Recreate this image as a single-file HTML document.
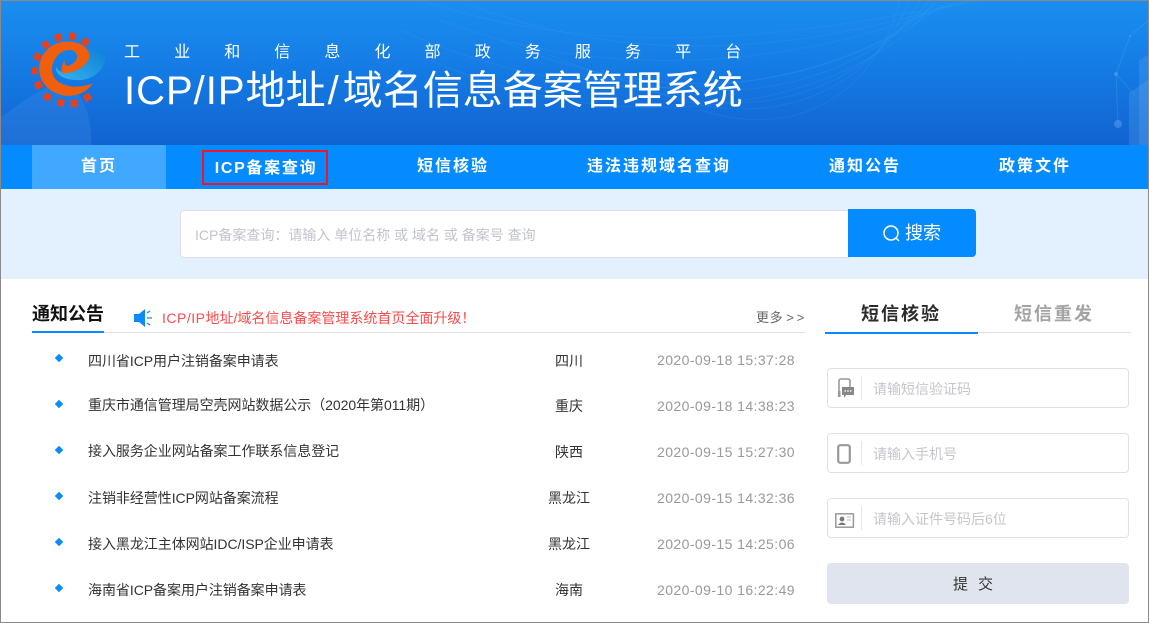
<!DOCTYPE html>
<html lang="zh"><head><meta charset="utf-8"><title>ICP/IP地址/域名信息备案管理系统</title>
<style>
*{box-sizing:border-box;margin:0;padding:0}
html,body{width:1149px;height:623px;overflow:hidden;background:#fff}
body{position:relative;font-family:"Liberation Sans","Noto Sans CJK SC",sans-serif}
.a{position:absolute;white-space:nowrap}
.nav{top:145px;height:44px;line-height:44px;font-size:16px;font-weight:700;color:#fff;letter-spacing:2px;text-align:center}
.row{font-size:14px;color:#333;height:20px;line-height:20px}
.dot{width:6px;height:6px;background:#0a8cff;transform:rotate(45deg);left:56px}
.prov{left:529px;width:80px;text-align:center}
.time{left:657px;color:#999;font-size:14px;letter-spacing:.42px}
.inp{left:827px;width:302px;height:40px;border:1px solid #dfe1ea;border-radius:4px;background:#fff}
.sep{left:861px;width:1px;height:24px;background:#e4e6ec}
.ph{left:873px;font-size:14px;color:#c4c6cc;height:20px;line-height:20px}
.t{left:88px;letter-spacing:-.05px}
</style></head><body>
<div class="a" style="left:0;top:0;width:1149px;height:145px;background:linear-gradient(180deg,#1a8ff0 0%,#1478e2 55%,#1263d0 100%);overflow:hidden">
<svg class="a" style="left:0;top:0" width="1149" height="145" fill="none">
<path d="M0 118C25 100 45 85 62 82 85 90 92 120 91 145H0Z" fill="#3f8ae6" fill-opacity=".3"/>
<g stroke="#5cb4ff" stroke-opacity=".13">
<path d="M420 0C600 60 780 40 980 0"/><path d="M440 20C620 90 830 60 960 0"/><path d="M500 40C680 120 850 80 940 0"/><path d="M600 70C740 140 870 90 920 0"/><path d="M700 110C810 145 880 80 900 0"/><path d="M470 5C640 70 810 50 970 0"/><path d="M550 55C710 125 860 85 930 0"/><path d="M650 90C775 140 875 85 910 0"/><path d="M400 30C600 120 820 100 950 0"/><path d="M430 60C620 145 860 110 935 0"/>
</g>
<g fill="#6db0f5" fill-opacity=".22"><path d="M1129 93l19-13v65h-19z"/><path d="M1139 60l9-5v90h-9z"/></g>
<g stroke="#7dbbf7" stroke-opacity=".2"><path d="M1118 124L1116 74 1130 36 1149 20M1116 74L1135 95"/></g>
<g fill="#7dbbf7" fill-opacity=".35"><circle cx="1118" cy="124" r="4"/><circle cx="1116" cy="74" r="2"/><circle cx="1130" cy="36" r="1"/></g>
</svg>
</div>
<svg class="a" style="left:20px;top:20px" width="100" height="100" viewBox="0 0 300 300">
<defs><linearGradient id="b" x1="0" y1="1" x2="1" y2="0"><stop offset="0" stop-color="#35b4ee"/><stop offset="1" stop-color="#0f7fd8"/></linearGradient></defs>
<g fill="#e8401a">
<rect x="104" y="42" width="21" height="21" transform="rotate(-14 115 52)"/><rect x="147" y="38" width="21" height="21" transform="rotate(8 157 48)"/><rect x="186" y="55" width="21" height="21" transform="rotate(25 196 65)"/>
<rect x="67" y="64" width="21" height="21" transform="rotate(-30 77 74)"/><rect x="42" y="100" width="21" height="21" transform="rotate(-60 52 110)"/><rect x="36" y="142" width="18" height="21"/>
<rect x="45" y="185" width="21" height="21" transform="rotate(-25 55 195)"/><rect x="72" y="220" width="21" height="21" transform="rotate(22 82 230)"/><rect x="112" y="238" width="21" height="21" transform="rotate(8 122 248)"/><rect x="152" y="240" width="21" height="21" transform="rotate(-8 162 250)"/><rect x="192" y="222" width="21" height="21" transform="rotate(-30 202 232)"/>
</g>
<path d="M190 90C225 80 258 90 255 120 250 155 210 185 165 180 130 178 105 165 108 140 115 160 150 165 180 145 205 130 215 105 190 90Z" fill="url(#b)"/>
<path d="M218 190C195 225 150 235 115 222 75 208 55 175 58 140 62 95 100 65 140 65 175 63 205 80 208 105 210 130 170 160 130 160 122 160 122 135 135 122 130 145 150 140 165 125 178 110 170 92 150 90 120 88 95 120 96 150 97 190 150 215 218 190Z" fill="#f15f0c"/>
</svg>
<div class="a" style="left:124px;top:42px;font-size:16px;line-height:22px;color:#fff;letter-spacing:34.1px">工业和信息化部政务服务平台</div>
<div class="a" style="left:124px;top:62px;font-size:40px;line-height:58px;color:#fff"><span style="letter-spacing:1px">ICP/IP</span>地址<span style="letter-spacing:4px;margin-left:2px">/</span>域名信息备案管理系统</div>

<div class="a" style="left:0;top:145px;width:1149px;height:44px;background:#048bff"></div>
<div class="a" style="left:32px;top:145px;width:134px;height:44px;background:#41a8ff"></div>
<div class="a nav" style="left:32px;width:134px">首页</div>
<div class="a nav" style="left:202px;width:126px;top:150px;height:35px;line-height:33px;border:2px solid #f01528;letter-spacing:1.7px;padding-left:2px">ICP备案查询</div>
<div class="a nav" style="left:393px;width:120px">短信核验</div>
<div class="a nav" style="left:559px;width:200px">违法违规域名查询</div>
<div class="a nav" style="left:805px;width:120px">通知公告</div>
<div class="a nav" style="left:975px;width:120px">政策文件</div>

<div class="a" style="left:0;top:189px;width:1149px;height:90px;background:#e3f1ff"></div>
<div class="a" style="left:180px;top:210px;width:670px;height:48px;background:#fff;border:1px solid #dcdfe6;border-radius:4px 0 0 4px"></div>
<div class="a" style="left:195px;top:225px;font-size:14px;line-height:20px;color:#c0c4cc">ICP备案查询：请输入 单位名称 或 域名 或 备案号 查询</div>
<div class="a" style="left:848px;top:209px;width:128px;height:48px;background:#048bff;border-radius:0 4px 4px 0"></div>
<svg class="a" style="left:882px;top:223px" width="20" height="20" fill="none" stroke="#fff" stroke-width="1.5"><circle cx="9" cy="10" r="7"/><path d="M14 15l3 3"/></svg>
<div class="a" style="left:905px;top:220px;font-size:18px;line-height:26px;color:#fff">搜索</div>

<div class="a" style="left:32px;top:332px;width:773px;height:1px;background:#dedede"></div>
<div class="a" style="left:32px;top:331px;width:72px;height:2px;background:#048bff"></div>
<div class="a" style="left:32px;top:301px;font-size:18px;line-height:26px;font-weight:700;color:#111">通知公告</div>
<svg class="a" style="left:134px;top:309px" width="20" height="18" fill="#0a8bfe"><path d="M0 5h5l6-5v18l-6-5H0z"/><path d="M13 4l3-2M13 9h5M13 14l3 2" stroke="#0a8bfe" stroke-width="1.3"/></svg>
<div class="a" style="left:162px;top:308px;font-size:14px;line-height:20px;color:#fa4b4b"><span style="letter-spacing:.5px">ICP/IP</span>地址/域名信息备案管理系统首页全面升级！</div>
<div class="a" style="left:756px;top:308px;font-size:13px;line-height:20px;color:#666;letter-spacing:.6px">更多<span style="letter-spacing:3px;margin-left:3px">&gt;&gt;</span></div>

<div class="a dot" style="top:355px"></div><div class="a row t" style="top:351px">四川省ICP用户注销备案申请表</div><div class="a row prov" style="top:351px">四川</div><div class="a row time" style="top:350px">2020-09-18 15:37:28</div>
<div class="a dot" style="top:401px"></div><div class="a row t" style="top:395px">重庆市通信管理局空壳网站数据公示（2020年第011期）</div><div class="a row prov" style="top:396px">重庆</div><div class="a row time" style="top:396px">2020-09-18 14:38:23</div>
<div class="a dot" style="top:447px"></div><div class="a row t" style="top:441px">接入服务企业网站备案工作联系信息登记</div><div class="a row prov" style="top:442px">陕西</div><div class="a row time" style="top:442px">2020-09-15 15:27:30</div>
<div class="a dot" style="top:493px"></div><div class="a row t" style="top:488px">注销非经营性ICP网站备案流程</div><div class="a row prov" style="top:488px">黑龙江</div><div class="a row time" style="top:488px">2020-09-15 14:32:36</div>
<div class="a dot" style="top:539px"></div><div class="a row t" style="top:534px">接入黑龙江主体网站IDC/ISP企业申请表</div><div class="a row prov" style="top:534px">黑龙江</div><div class="a row time" style="top:534px">2020-09-15 14:25:06</div>
<div class="a dot" style="top:585px"></div><div class="a row t" style="top:580px">海南省ICP备案用户注销备案申请表</div><div class="a row prov" style="top:580px">海南</div><div class="a row time" style="top:580px">2020-09-10 16:22:49</div>

<div class="a" style="left:825px;top:332px;width:306px;height:1px;background:#dedede"></div>
<div class="a" style="left:825px;top:332px;width:153px;height:2px;background:#048bff"></div>
<div class="a" style="left:861px;top:301px;font-size:18px;line-height:26px;font-weight:700;color:#2b2b2b;letter-spacing:2px">短信核验</div>
<div class="a" style="left:1014px;top:301px;font-size:18px;line-height:26px;font-weight:700;color:#a3a3a3;letter-spacing:2px">短信重发</div>

<div class="a inp" style="top:368px"></div><div class="a sep" style="top:376px"></div>
<svg class="a" style="left:837px;top:378px" width="18" height="21" fill="none"><path d="M2 13V3q0-2 2-2h7q2 0 2 2v6" stroke="#999" stroke-width="1.6"/><path d="M1 13h2.5v6H1z" fill="#999"/><path d="M5 9h12v8H9l-2 3v-3H5z" fill="#888"/><path d="M7.5 13h1.4M10.3 13h1.4M13 13h1.4" stroke="#fff" stroke-width="1.6"/></svg>
<div class="a ph" style="top:379px">请输短信验证码</div>

<div class="a inp" style="top:433px"></div><div class="a sep" style="top:441px"></div>
<svg class="a" style="left:837px;top:444px" width="14" height="20" fill="none"><rect x="1.2" y="1.2" width="11.6" height="17.6" rx="2" stroke="#999" stroke-width="2.2"/></svg>
<div class="a ph" style="top:444px">请输入手机号</div>

<div class="a inp" style="top:498px"></div><div class="a sep" style="top:506px"></div>
<svg class="a" style="left:835px;top:512px" width="20" height="17" fill="none"><rect x=".8" y="1.8" width="17.6" height="13.4" stroke="#999" stroke-width="1.5"/><circle cx="7" cy="7" r="2.4" fill="#777"/><path d="M3 13q4-5 8 0z" fill="#777"/><path d="M12 5h4M12 8h4" stroke="#bbb"/></svg>
<div class="a ph" style="top:509px">请输入证件号码后6位</div>

<div class="a" style="left:827px;top:563px;width:302px;height:41px;background:#e0e4ef;border-radius:4px;text-align:center;font-size:15px;line-height:44px;color:#333;letter-spacing:10px">提交</div>

<div class="a" style="left:0;top:0;width:1149px;height:1px;background:#8a8a8a"></div>
<div class="a" style="left:0;top:0;width:1px;height:623px;background:#8a8a8a"></div>
<div class="a" style="left:1148px;top:0;width:1px;height:623px;background:#8a8a8a"></div>
<div class="a" style="left:0;top:622px;width:1149px;height:1px;background:#8a8a8a"></div>
</body></html>
